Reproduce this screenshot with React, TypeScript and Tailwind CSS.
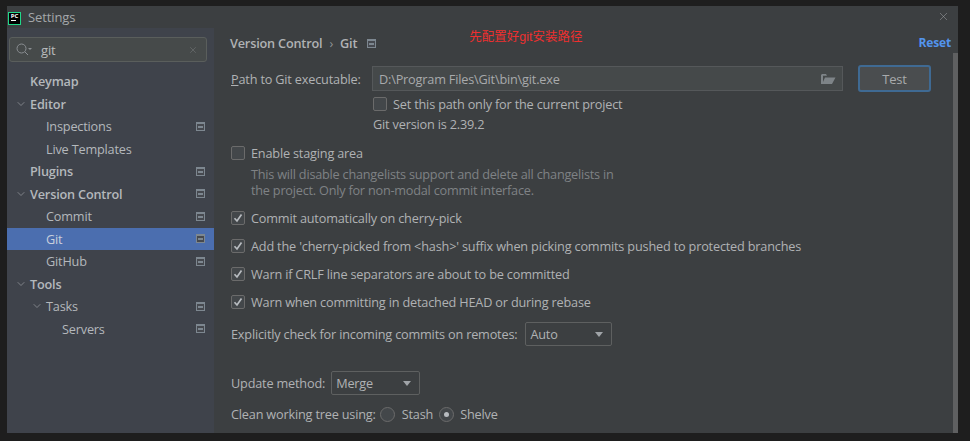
import { ChevronDown, X } from "lucide-react";

const font = "font-['Open_Sans','Noto_Sans_CJK_SC',sans-serif]";

function PageIcon() {
  return (
    <svg width="9" height="9" viewBox="0 0 9 9" className="shrink-0">
      <rect x="0" y="0" width="9" height="9" fill="#7d8790" />
      <rect x="1" y="2" width="7" height="6" fill="#46494f" />
      <rect x="2" y="4" width="5" height="2" fill="#7d8790" />
    </svg>
  );
}

type NavItem = {
  label: string;
  level: number;
  bold?: boolean;
  arrow?: boolean;
  page?: boolean;
  selected?: boolean;
};

const navItems: NavItem[] = [
  { label: "Keymap", level: 0, bold: true },
  { label: "Editor", level: 0, bold: true, arrow: true },
  { label: "Inspections", level: 1, page: true },
  { label: "Live Templates", level: 1 },
  { label: "Plugins", level: 0, bold: true, page: true },
  { label: "Version Control", level: 0, bold: true, arrow: true, page: true },
  { label: "Commit", level: 1, page: true },
  { label: "Git", level: 1, page: true, selected: true },
  { label: "GitHub", level: 1, page: true },
  { label: "Tools", level: 0, bold: true, arrow: true },
  { label: "Tasks", level: 1, arrow: true, page: true },
  { label: "Servers", level: 2, page: true },
];

function NavRow({ item }: { item: NavItem }) {
  return (
    <div
      className={`relative flex h-[22.5px] items-center pr-[9px] ${
        item.selected ? "bg-[#4b6eaf] text-[#c8d0dc]" : "text-[#b4b8bc]"
      } ${item.bold ? "font-semibold" : ""} ${
        item.level === 0 ? "pl-[23px]" : item.level === 1 ? "pl-[39px]" : "pl-[55px]"
      }`}
    >
      {item.arrow && (
        <ChevronDown
          size={12}
          strokeWidth={1.3}
          className={`absolute text-[#a0a4a8] ${item.level === 0 ? "left-[8px]" : "left-[24px]"}`}
        />
      )}
      <span className="flex-1">{item.label}</span>
      {item.page && <PageIcon />}
    </div>
  );
}

function Check({ checked }: { checked?: boolean }) {
  return (
    <span className="flex h-[14px] w-[14px] shrink-0 items-center justify-center rounded-[2px] border border-[#6b6b6b] bg-[#43474a]">
      {checked && (
        <svg width="10" height="10" viewBox="0 0 10 10">
          <path d="M1.5 5.2 L4 8 L8.5 1.5" fill="none" stroke="#b8bcc0" strokeWidth="1.7" />
        </svg>
      )}
    </span>
  );
}

function CheckRow({ label, checked, className }: { label: string; checked?: boolean; className: string }) {
  return (
    <div className={`flex items-center gap-[6px] ${className}`}>
      <Check checked={checked} />
      <span>{label}</span>
    </div>
  );
}

function Select({ value, width }: { value: string; width: string }) {
  return (
    <div className={`flex h-[24px] items-center justify-between rounded-[2px] border border-[#5e6060] bg-[#3c3f41] pl-[4px] pr-[8px] ${width}`}>
      <span>{value}</span>
      <span className="h-0 w-0 border-x-[4px] border-t-[5px] border-x-transparent border-t-[#a0a4a8]" />
    </div>
  );
}

function Radio({ on }: { on?: boolean }) {
  return (
    <span className="flex h-[15px] w-[15px] shrink-0 items-center justify-center rounded-full border border-[#6b6b6b] bg-[#43474a]">
      {on && <span className="h-[5px] w-[5px] rounded-full bg-[#b8bcc0]" />}
    </span>
  );
}

export default function App() {
  return (
    <div className={`h-[441px] w-[970px] overflow-hidden bg-[#1e1e1e] pl-[7px] pt-[6px] ${font} text-[12.7px] leading-[18px] tracking-[-0.18px]`}>
      <div className="relative flex h-[427px] w-[951px] flex-col bg-[#3c3f41] text-[#b0b2b4]">
        {/* title bar */}
        <div className="flex h-[22px] shrink-0 items-center pl-[1px] pr-[8px]">
          <div className="mt-[3px] flex h-[13px] w-[13px] flex-col items-center justify-start border border-[#21d789] bg-black">
            <span className="text-[6px] font-bold leading-[6px] tracking-normal text-white">PC</span>
            <span className="ml-[-3px] mt-[1px] h-[1px] w-[5px] bg-white" />
          </div>
          <span className="ml-[7px] flex-1 text-[13px] tracking-[-0.1px] text-[#a4a7aa]">Settings</span>
          <X size={13} strokeWidth={0.9} className="mt-[-1px] text-[#a8abae]" />
        </div>

        <div className="flex min-h-0 flex-1">
          {/* sidebar */}
          <div className="w-[207px] shrink-0 bg-[#3f434b] pt-[9px]">
            <div className="ml-[2px] flex h-[25px] w-[198px] items-center rounded-[3px] border border-[#5a5e5c] bg-[#464a4a] pl-[6px] pr-[8px]">
              <svg width="16" height="14" viewBox="0 0 16 14" className="shrink-0">
                <circle cx="5.5" cy="5.5" r="4.5" fill="none" stroke="#8a8e92" />
                <path d="M9 9 L12 12" stroke="#8a8e92" />
                <path d="M12 5 L16 5 L14 7 Z" fill="#8a8e92" />
              </svg>
              <span className="ml-[9px] flex-1 text-[13px] text-[#b8babc]">git</span>
              <X size={10} strokeWidth={1} className="text-[#85888b]" />
            </div>
            <div className="mt-[8px]">
              {navItems.map((item) => (
                <NavRow key={item.label} item={item} />
              ))}
            </div>
          </div>

          {/* content */}
          <div className="relative min-w-0 flex-1 pl-[17px] pr-[27px] pt-[6px]">
            <div className="ml-[-1px] flex h-[18px] items-center">
              <span className="font-semibold">Version Control</span>
              <span className="mx-[7px] text-[#909396]">›</span>
              <span className="font-semibold">Git</span>
              <span className="ml-[10px]"><PageIcon /></span>
              <span className="ml-[93px] mt-[-12px] font-['Liberation_Sans','Noto_Sans_CJK_SC',sans-serif] text-[12.5px] tracking-normal text-[#ee2f2f]">先配置好git安装路径</span>
              <span className="ml-auto mr-[-20px] text-[12px] font-bold text-[#5394ec]">Reset</span>
            </div>

            <div className="mt-[13px] flex items-center">
              <span className="w-[141px]"><span className="underline">P</span>ath to Git executable:</span>
              <div className="flex h-[25px] w-[471px] items-center justify-between border border-[#55585a] bg-[#45494a] px-[6px] text-[#a8aaac]">
                <span>D:\Program Files\Git\bin\git.exe</span>
                <svg width="15" height="12" viewBox="0 0 15 12">
                  <path d="M0 2 L0 11 L11 11 L14.5 4.5 L4 4.5 L2 9 L2 2.8 L6 2.8 L5 1 L1 1 Z" fill="#7e8488" />
                </svg>
              </div>
              <div className="ml-[15px] flex h-[27px] w-[73px] items-center justify-center rounded-[3px] border-2 border-[#3f6a93] bg-[#4a4d4f] text-[13px] text-[#a8aaac]">Test</div>
            </div>

            <CheckRow label="Set this path only for the current project" className="ml-[142px] mt-[3px]" />
            <div className="ml-[142px] mt-[2px]">Git version is 2.39.2</div>

            <CheckRow label="Enable staging area" className="mt-[11px]" />
            <div className="ml-[20px] mt-[4px] w-[400px] leading-[16px] tracking-[-0.22px] text-[#7f8285]">
              This will disable changelists support and delete all changelists in
              <br />
              the project. Only for non-modal commit interface.
            </div>

            <CheckRow label="Commit automatically on cherry-pick" checked className="mt-[11px]" />
            <CheckRow label="Add the 'cherry-picked from <hash>' suffix when picking commits pushed to protected branches" checked className="mt-[10px]" />
            <CheckRow label="Warn if CRLF line separators are about to be committed" checked className="mt-[10px]" />
            <CheckRow label="Warn when committing in detached HEAD or during rebase" checked className="mt-[10px]" />

            <div className="mt-[11px] flex items-center gap-[8px]">
              <span>Explicitly check for incoming commits on remotes:</span>
              <Select value="Auto" width="w-[87px]" />
            </div>
            <div className="mt-[25px] flex items-center gap-[6px]">
              <span>Update method:</span>
              <Select value="Merge" width="w-[89px]" />
            </div>
            <div className="mt-[10px] flex items-center">
              <span>Clean working tree using:</span>
              <span className="ml-[4px]"><Radio /></span>
              <span className="ml-[7px]">Stash</span>
              <span className="ml-[6px]"><Radio on /></span>
              <span className="ml-[6px]">Shelve</span>
            </div>

            {/* scrollbar */}
            <div className="absolute bottom-0 right-0 top-[25px] w-[5px] bg-[#5f6061]" />
          </div>
        </div>
      </div>
    </div>
  );
}
